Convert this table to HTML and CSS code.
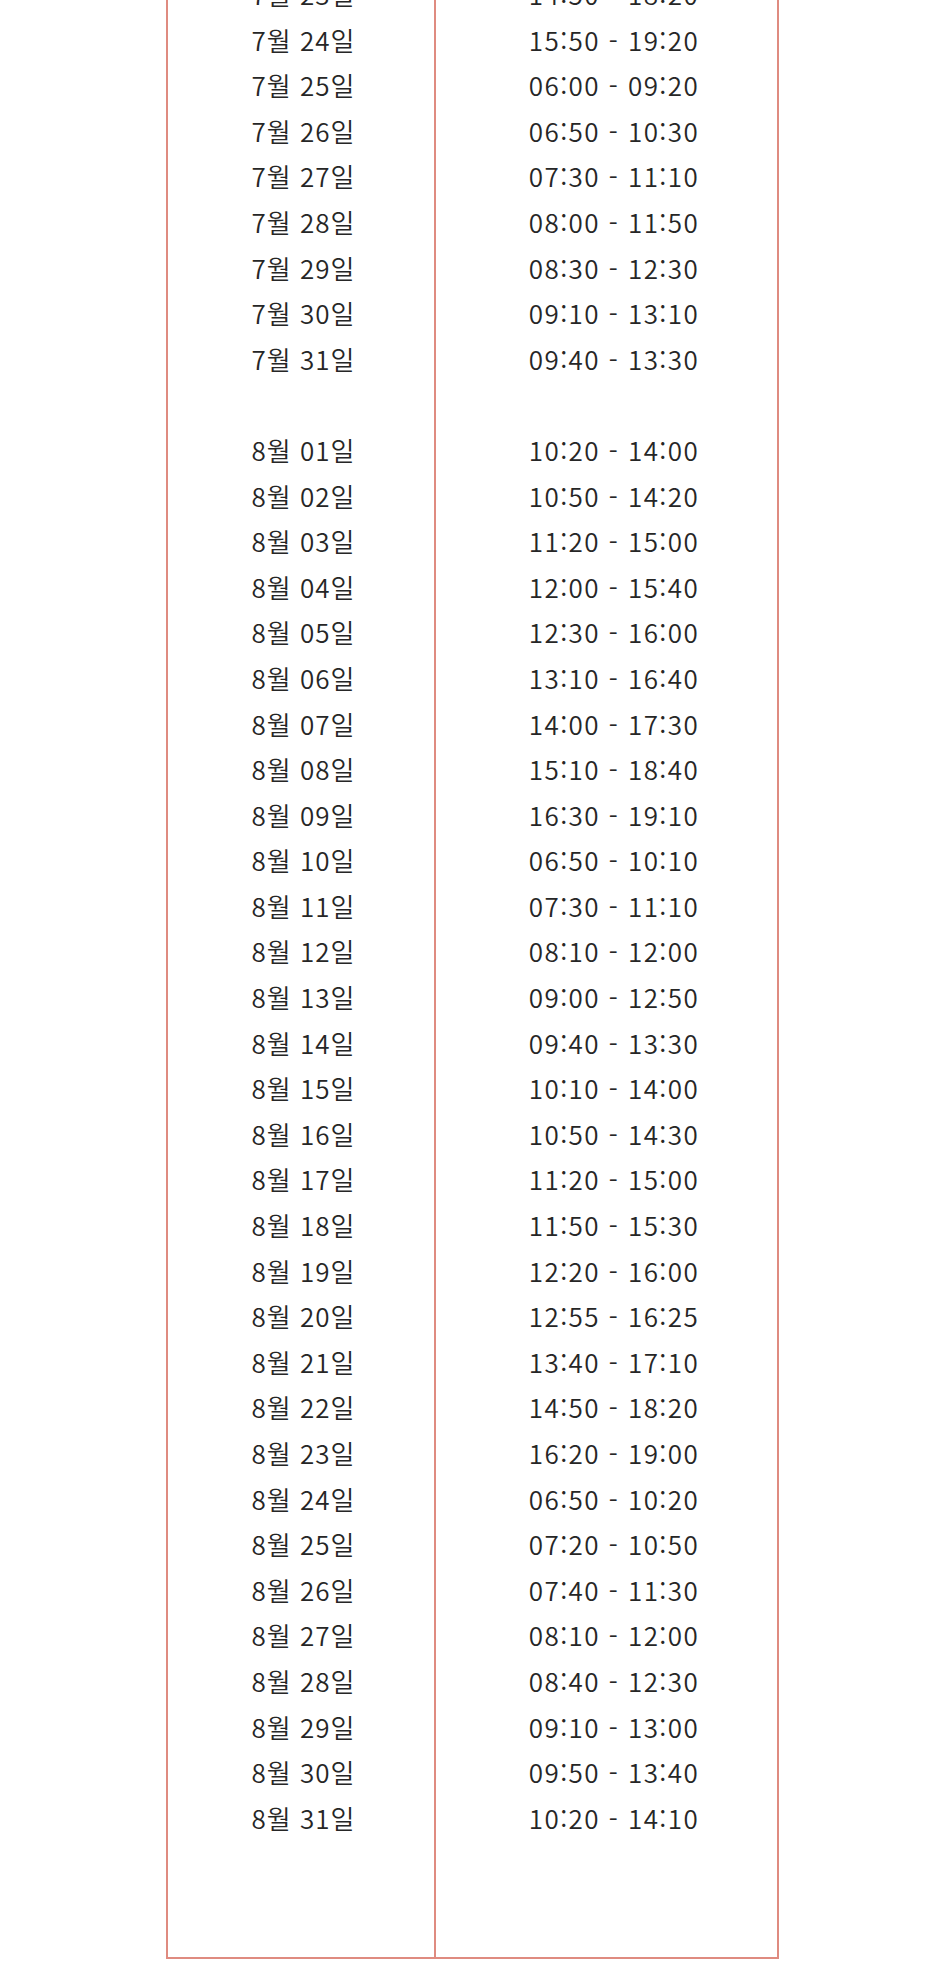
FILE: index.html
```html
<!DOCTYPE html>
<html lang="ko">
<head>
<meta charset="utf-8">
<link rel="stylesheet" href="styles.css">
</head>
<body>
<div class="sheet">
  <div class="col col-date">
    <div class="row">7월 23일</div>
    <div class="row">7월 24일</div>
    <div class="row">7월 25일</div>
    <div class="row">7월 26일</div>
    <div class="row">7월 27일</div>
    <div class="row">7월 28일</div>
    <div class="row">7월 29일</div>
    <div class="row">7월 30일</div>
    <div class="row">7월 31일</div>
    <div class="row"></div>
    <div class="row">8월 01일</div>
    <div class="row">8월 02일</div>
    <div class="row">8월 03일</div>
    <div class="row">8월 04일</div>
    <div class="row">8월 05일</div>
    <div class="row">8월 06일</div>
    <div class="row">8월 07일</div>
    <div class="row">8월 08일</div>
    <div class="row">8월 09일</div>
    <div class="row">8월 10일</div>
    <div class="row">8월 11일</div>
    <div class="row">8월 12일</div>
    <div class="row">8월 13일</div>
    <div class="row">8월 14일</div>
    <div class="row">8월 15일</div>
    <div class="row">8월 16일</div>
    <div class="row">8월 17일</div>
    <div class="row">8월 18일</div>
    <div class="row">8월 19일</div>
    <div class="row">8월 20일</div>
    <div class="row">8월 21일</div>
    <div class="row">8월 22일</div>
    <div class="row">8월 23일</div>
    <div class="row">8월 24일</div>
    <div class="row">8월 25일</div>
    <div class="row">8월 26일</div>
    <div class="row">8월 27일</div>
    <div class="row">8월 28일</div>
    <div class="row">8월 29일</div>
    <div class="row">8월 30일</div>
    <div class="row">8월 31일</div>
  </div>
  <div class="col col-time">
    <div class="row">14:50 - 18:20</div>
    <div class="row">15:50 - 19:20</div>
    <div class="row">06:00 - 09:20</div>
    <div class="row">06:50 - 10:30</div>
    <div class="row">07:30 - 11:10</div>
    <div class="row">08:00 - 11:50</div>
    <div class="row">08:30 - 12:30</div>
    <div class="row">09:10 - 13:10</div>
    <div class="row">09:40 - 13:30</div>
    <div class="row"></div>
    <div class="row">10:20 - 14:00</div>
    <div class="row">10:50 - 14:20</div>
    <div class="row">11:20 - 15:00</div>
    <div class="row">12:00 - 15:40</div>
    <div class="row">12:30 - 16:00</div>
    <div class="row">13:10 - 16:40</div>
    <div class="row">14:00 - 17:30</div>
    <div class="row">15:10 - 18:40</div>
    <div class="row">16:30 - 19:10</div>
    <div class="row">06:50 - 10:10</div>
    <div class="row">07:30 - 11:10</div>
    <div class="row">08:10 - 12:00</div>
    <div class="row">09:00 - 12:50</div>
    <div class="row">09:40 - 13:30</div>
    <div class="row">10:10 - 14:00</div>
    <div class="row">10:50 - 14:30</div>
    <div class="row">11:20 - 15:00</div>
    <div class="row">11:50 - 15:30</div>
    <div class="row">12:20 - 16:00</div>
    <div class="row">12:55 - 16:25</div>
    <div class="row">13:40 - 17:10</div>
    <div class="row">14:50 - 18:20</div>
    <div class="row">16:20 - 19:00</div>
    <div class="row">06:50 - 10:20</div>
    <div class="row">07:20 - 10:50</div>
    <div class="row">07:40 - 11:30</div>
    <div class="row">08:10 - 12:00</div>
    <div class="row">08:40 - 12:30</div>
    <div class="row">09:10 - 13:00</div>
    <div class="row">09:50 - 13:40</div>
    <div class="row">10:20 - 14:10</div>
  </div>
</div>
</body>
</html>
```

FILE: styles.css
```css
html, body {
  margin: 0;
  padding: 0;
  background: #ffffff;
}
body {
  overflow: hidden;
  height: 1973px;
}
.sheet {
  display: flex;
  box-sizing: border-box;
  width: 613px;
  margin: -29px 0 0 166px;
  border: 2px solid #df8b80;
  border-top: none;
  font-family: "Noto Sans CJK KR", "Noto Sans", sans-serif;
  font-size: 26px;
  font-weight: 350;
  letter-spacing: 1px;
  color: #262626;
}
.col {
  padding-bottom: 117px;
}
.col-date {
  width: 268px;
  flex: none;
  padding-left: 5px;
  border-right: 2px solid #df8b80;
  box-sizing: border-box;
}
.col-time {
  flex: 1;
  padding-left: 15px;
  letter-spacing: 1.45px;
}
.row {
  height: 45.6px;
  line-height: 45.6px;
  text-align: center;
  white-space: nowrap;
}
```
